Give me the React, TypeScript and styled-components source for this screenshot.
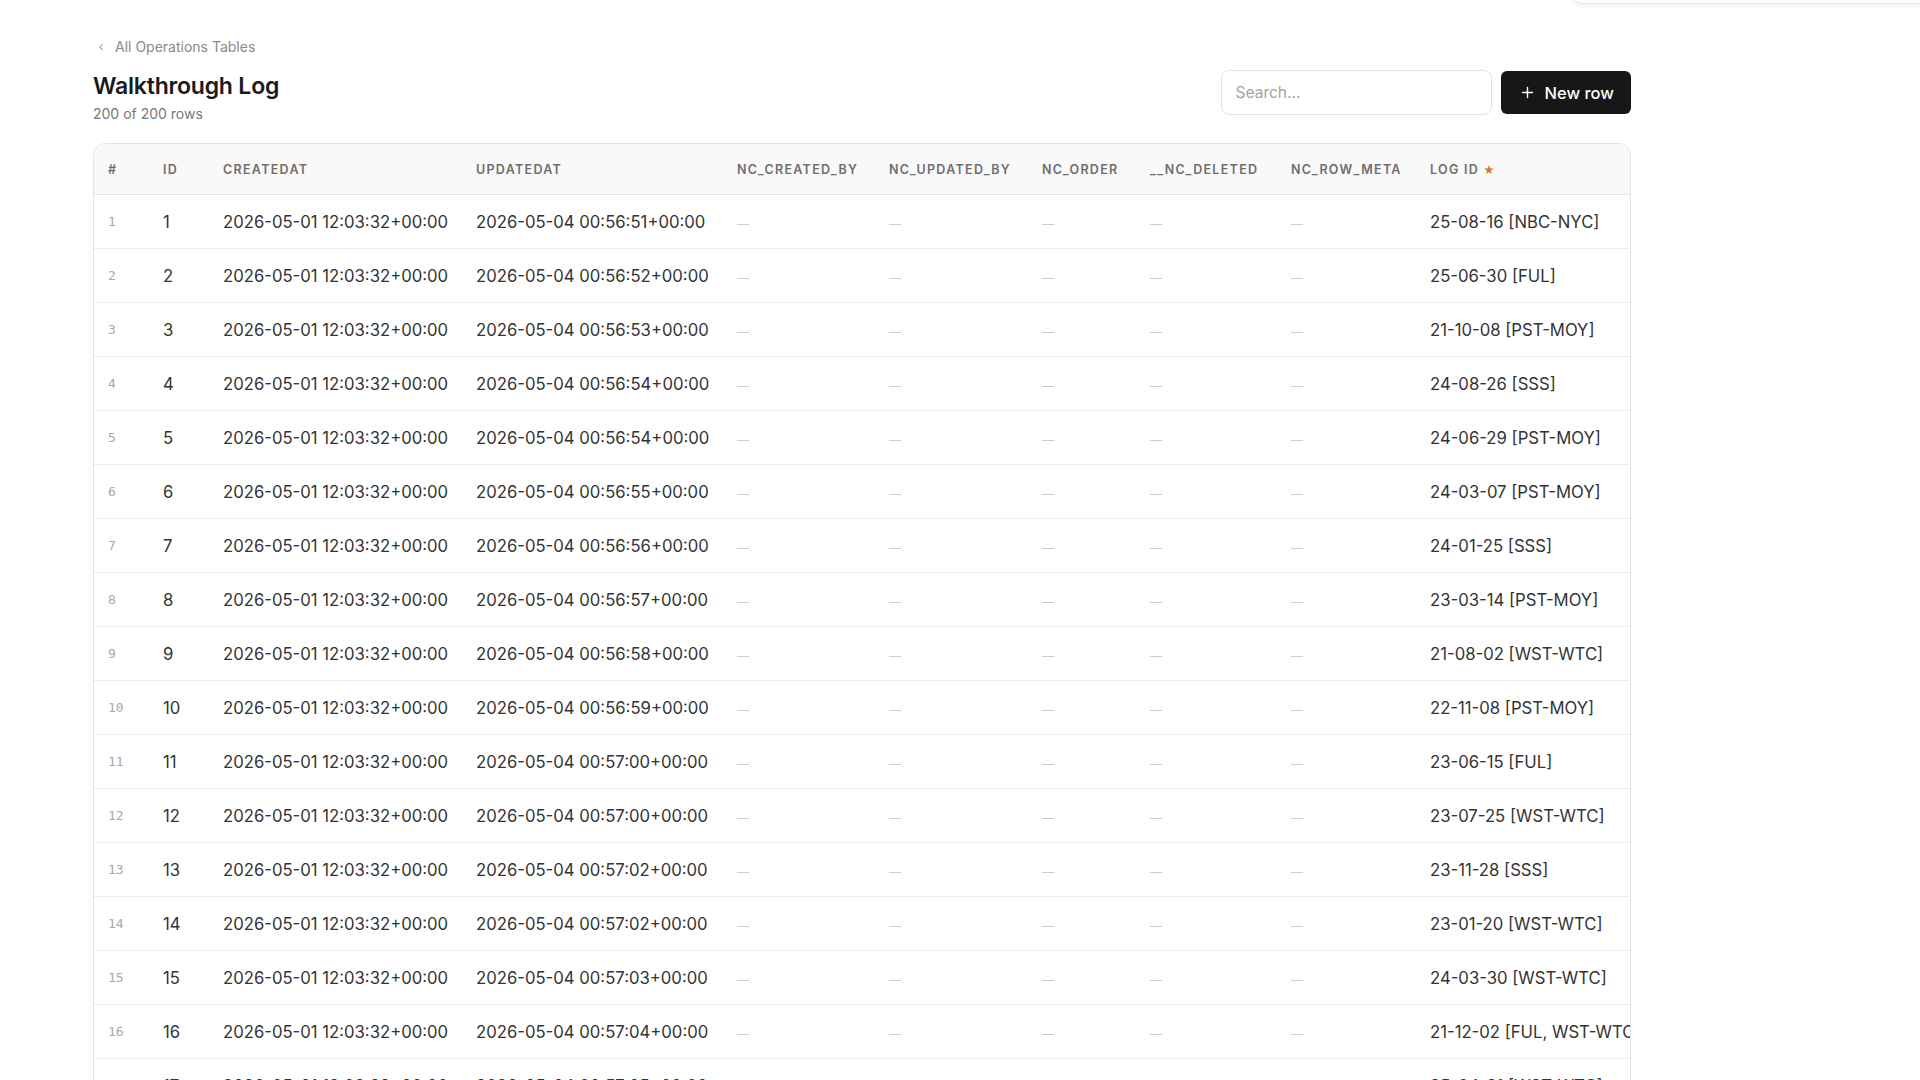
import styled, { createGlobalStyle } from "styled-components";

const GlobalStyle = createGlobalStyle`
  html, body {
    margin: 0;
    padding: 0;
    background: #ffffff;
    overflow: hidden;
  }
  body {
    font-family: Inter, "Noto Sans", "Liberation Sans", sans-serif;
    color: #2b2b2b;
  }
`;

const Page = styled.div`
  position: relative;
  height: 100vh;
  overflow: hidden;
  padding: 36px 0 0 93px;
  box-sizing: border-box;
`;

const CornerCard = styled.div`
  position: absolute;
  top: -60px;
  right: -20px;
  width: 368px;
  height: 62px;
  border: 1px solid #e6e6e6;
  border-radius: 12px;
  box-shadow: 0 2px 4px rgba(0, 0, 0, 0.06);
  background: #fff;
`;

const Wrapper = styled.div`
  width: 1538px;
`;

const Breadcrumb = styled.a`
  display: inline-flex;
  align-items: center;
  gap: 9px;
  font-size: 14px;
  line-height: 18px;
  color: #8a8a8a;
  text-decoration: none;
  margin-left: 3px;
`;

const HeaderBar = styled.div`
  display: flex;
  justify-content: space-between;
  align-items: flex-start;
  margin-top: 15px;
`;

const TitleBlock = styled.div`
  display: flex;
  flex-direction: column;
`;

const Title = styled.h1`
  margin: 0;
  font-size: 23px;
  font-weight: 600;
  color: #1a1a1a;
  letter-spacing: -0.2px;
  line-height: 30px;
`;

const Subtitle = styled.div`
  margin-top: 4px;
  font-size: 14px;
  line-height: 18px;
  color: #777;
`;

const Actions = styled.div`
  display: flex;
  gap: 9px;
  align-items: center;
  margin-top: -1px;
`;

const Search = styled.input`
  width: 271px;
  height: 45px;
  box-sizing: border-box;
  border: 1px solid #e3e3e3;
  border-radius: 8px;
  padding: 0 14px;
  font-family: inherit;
  font-size: 15.5px;
  color: #333;
  outline: none;
  &::placeholder {
    color: #a3a3a3;
  }
`;

const PrimaryButton = styled.button`
  display: inline-flex;
  align-items: center;
  gap: 9px;
  height: 43px;
  padding: 0 17px 0 18px;
  background: #171717;
  color: #fff;
  border: none;
  border-radius: 6px;
  font-family: inherit;
  font-size: 16.5px;
  font-weight: 500;
`;

const TableFrame = styled.div`
  margin-top: 20px;
  border: 1px solid #e4e4e4;
  border-radius: 12px;
  overflow: hidden;
`;

const Table = styled.table`
  table-layout: fixed;
  border-collapse: collapse;
  width: 1600px;
`;

const HeadCell = styled.th`
  height: 50px;
  padding: 0 0 0 14px;
  background: #f9f9f9;
  border-bottom: 1px solid #e4e4e4;
  text-align: left;
  font-size: 12.5px;
  font-weight: 600;
  letter-spacing: 1.3px;
  text-transform: uppercase;
  color: #6e6e6e;
  white-space: nowrap;
`;

const Star = styled.span`
  color: #e07132;
  font-size: 11px;
  margin-left: 4px;
`;

const Row = styled.tr`
  border-bottom: 1px solid #ececec;
`;

const Cell = styled.td<{ $muted?: boolean }>`
  height: 53px;
  padding: 0 0 0 14px;
  font-size: 16.7px;
  color: ${(p) => (p.$muted ? "#c9c9c9" : "#333")};
  white-space: nowrap;
  overflow: hidden;
`;

const IndexCell = styled.td`
  height: 53px;
  padding: 0 0 0 14px;
  font-family: "DejaVu Sans Mono", "Liberation Mono", monospace;
  font-size: 13px;
  color: #a8a8a8;
`;

const Dash = styled.span`
  font-size: 12px;
  color: #cdcdcd;
`;

const columns = [
  { label: "#", width: 55 },
  { label: "ID", width: 60 },
  { label: "createdAt", width: 253 },
  { label: "updatedAt", width: 261 },
  { label: "nc_created_by", width: 152 },
  { label: "nc_updated_by", width: 153 },
  { label: "nc_order", width: 108 },
  { label: "__nc_deleted", width: 141 },
  { label: "nc_row_meta", width: 139 },
  { label: "Log ID", width: 278, star: true },
];

const updated = [
  "00:56:51", "00:56:52", "00:56:53", "00:56:54", "00:56:54", "00:56:55",
  "00:56:56", "00:56:57", "00:56:58", "00:56:59", "00:57:00", "00:57:00",
  "00:57:02", "00:57:02", "00:57:03", "00:57:04", "00:57:05",
];

const logIds = [
  "25-08-16 [NBC-NYC]", "25-06-30 [FUL]", "21-10-08 [PST-MOY]", "24-08-26 [SSS]",
  "24-06-29 [PST-MOY]", "24-03-07 [PST-MOY]", "24-01-25 [SSS]", "23-03-14 [PST-MOY]",
  "21-08-02 [WST-WTC]", "22-11-08 [PST-MOY]", "23-06-15 [FUL]", "23-07-25 [WST-WTC]",
  "23-11-28 [SSS]", "23-01-20 [WST-WTC]", "24-03-30 [WST-WTC]", "21-12-02 [FUL, WST-WTC]",
  "25-04-21 [WST-WTC]",
];

function ChevronLeft() {
  return (
    <svg width="10" height="10" viewBox="0 0 24 24" fill="none" stroke="#8a8a8a" strokeWidth="2.5" strokeLinecap="round" strokeLinejoin="round">
      <path d="m15 18-6-6 6-6" />
    </svg>
  );
}

function Plus() {
  return (
    <svg width="17" height="17" viewBox="0 0 24 24" fill="none" stroke="#fff" strokeWidth="2" strokeLinecap="round">
      <path d="M5 12h14M12 5v14" />
    </svg>
  );
}

export default function App() {
  return (
    <Page>
      <GlobalStyle />
      <CornerCard />
      <Wrapper>
        <Breadcrumb href="#">
          <ChevronLeft />
          All Operations Tables
        </Breadcrumb>
        <HeaderBar>
          <TitleBlock>
            <Title>Walkthrough Log</Title>
            <Subtitle>200 of 200 rows</Subtitle>
          </TitleBlock>
          <Actions>
            <Search placeholder="Search..." />
            <PrimaryButton>
              <Plus />
              New row
            </PrimaryButton>
          </Actions>
        </HeaderBar>
        <TableFrame>
          <Table>
            <colgroup>
              {columns.map((c) => (
                <col key={c.label} style={{ width: c.width }} />
              ))}
            </colgroup>
            <thead>
              <tr>
                {columns.map((c) => (
                  <HeadCell key={c.label}>
                    {c.label}
                    {c.star && <Star>★</Star>}
                  </HeadCell>
                ))}
              </tr>
            </thead>
            <tbody>
              {logIds.map((log, i) => (
                <Row key={i}>
                  <IndexCell>{i + 1}</IndexCell>
                  <Cell>{i + 1}</Cell>
                  <Cell>2026-05-01 12:03:32+00:00</Cell>
                  <Cell>2026-05-04 {updated[i]}+00:00</Cell>
                  {[0, 1, 2, 3, 4].map((k) => (
                    <Cell key={k} $muted>
                      <Dash>—</Dash>
                    </Cell>
                  ))}
                  <Cell>{log}</Cell>
                </Row>
              ))}
            </tbody>
          </Table>
        </TableFrame>
      </Wrapper>
    </Page>
  );
}
